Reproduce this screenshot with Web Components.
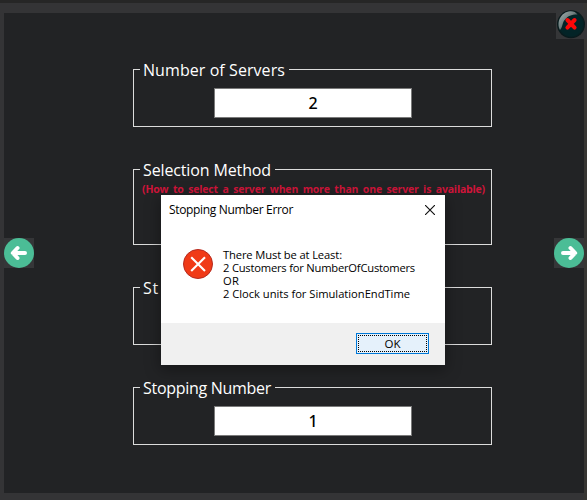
<!DOCTYPE html>
<html lang="en"><head><meta charset="utf-8"><title>Simulation setup</title>
<style>
html,body{margin:0;width:587px;height:500px;overflow:hidden;background:#343436}
</style></head><body>
<sim-window>
  <sim-group label="Number of Servers" w="142" style="height:58px;margin-bottom:42px"><sim-field value="2"></sim-field></sim-group>
  <sim-group label="Selection Method" w="128" style="height:76px;margin-bottom:42px"><sim-note></sim-note></sim-group>
  <sim-group label="St" w="16" style="height:58px;margin-bottom:42px"></sim-group>
  <sim-group label="Stopping Number" w="128" style="height:58px"><sim-field value="1"></sim-field></sim-group>
  <error-dialog slot="dialog"></error-dialog>
</sim-window>
<script>
const define=(name,html,setup)=>customElements.define(name,class extends HTMLElement{
  connectedCallback(){
    if(this.shadowRoot)return;
    this.attachShadow({mode:'open'}).innerHTML=html;
    if(setup)setup(this,this.shadowRoot);
  }
});
// Spreads one line of text over the width given in its "w" attribute.
define('fit-text','<style>:host{display:block;white-space:nowrap}span{display:inline-block}</style><span></span>',(el,r)=>{
  const s=r.querySelector('span'),t=el.getAttribute('text'),w=+el.getAttribute('w');
  s.textContent=t;
  s.style.letterSpacing=((w-s.getBoundingClientRect().width)/t.length)+'px';
  el.style.width=w+'px';
});
define('round-arrow',`<style>:host{display:block;width:30px;height:30px;background:#353638}svg{display:block}:host([dir=right]) g{transform:translate(30px,0) scaleX(-1)}</style>
<svg width="30" height="30"><circle cx="15" cy="15" r="15" fill="#4bbd96"/><g fill="none" stroke="#fff" stroke-width="4" stroke-linecap="round" stroke-linejoin="round"><path d="M21 15H9M13.5 10 8.8 15 13.5 20"/></g></svg>`);
define('glossy-close',`<style>:host{display:block;width:31px;height:29px;background:#353638}svg{display:block}</style>
<svg width="31" height="29"><defs><linearGradient id="g" x1="0" y1="0" x2="1" y2="1"><stop offset="0" stop-color="#a4b0b0"/><stop offset=".45" stop-color="#708080"/><stop offset=".75" stop-color="#28393a"/></linearGradient><radialGradient id="b"><stop offset=".82" stop-color="#032427"/><stop offset="1" stop-color="#0b1719"/></radialGradient></defs>
<circle cx="15" cy="14.3" r="14" fill="url(#b)"/><path d="M4 20C0 12 5 2 14 1.2 17 .9 20 2 21.5 4.5 15 4.5 12 6 9.5 9 6 12 7 17 4 20Z" fill="url(#g)"/>
<path d="M11.4 10 18.6 17.6M18.6 10 11.4 17.6" stroke="#fb0808" stroke-width="4" stroke-linecap="round"/></svg>`);
define('sim-field',`<style>:host{display:grid;place-items:center;box-sizing:border-box;width:198px;height:30px;margin:18px 0 0 80px;background:#fff;border:1px solid #7a7a7a;color:#000;font:500 16px/28px "Noto Sans",sans-serif}</style><span></span>`,(el,r)=>r.querySelector('span').textContent=el.getAttribute('value'));
define('sim-note',`<style>:host{display:block;padding:11px 0 0 8px;color:#d0143a;font:bold 10.5px/16px "Open Sans",sans-serif;word-spacing:2px}</style><fit-text w="343" text="(How to select a server when more than one server is available)"></fit-text>`);
define('sim-group',`<style>:host{display:block;box-sizing:border-box;width:359px;border:1px solid #dcdcdc}
.legend{height:0;display:flex;align-items:center}.legend div{background:#222325;margin-left:6px;padding:0 4px 0 3px;color:#fff;font:16px/20px "Open Sans",sans-serif}</style>
<div class="legend"><div></div></div><slot></slot>`,(el,r)=>{
  const f=document.createElement('fit-text');f.setAttribute('text',el.getAttribute('label'));f.setAttribute('w',el.getAttribute('w'));
  r.querySelector('.legend div').append(f);
});
define('error-dialog',`<style>:host{display:flex;flex-direction:column;width:284px;height:170px;background:#fff;color:#000;font:11.2px/13px "Open Sans",sans-serif;box-shadow:0 4px 14px 1px rgba(0,0,0,.35)}
header{display:flex;justify-content:space-between;align-items:center;height:29px;padding:0 10px 0 8px}header fit-text{font-size:12px}
main{flex:1;display:flex;padding:25px 22px 0}main>svg{flex:none;margin-right:9px}.lines{margin-top:-1px}
fit-text{height:13px}
footer{height:42px;background:#f0f0f0;display:flex;justify-content:flex-end;align-items:flex-start;padding:10px 16px 0;box-sizing:border-box}
button{box-sizing:border-box;width:73px;height:21px;padding:1px;background:#e5f1fb;border:1px solid #0078d7;color:#000;font:11.5px/15px "Open Sans",sans-serif}
button span{display:block;height:15px;border:1px dotted #000}</style>
<header><fit-text w="124" text="Stopping Number Error"></fit-text><svg width="10" height="10"><path d="M0 0 10 10M10 0 0 10" stroke="#111" stroke-width="1.15"/></svg></header>
<main><svg width="31" height="31"><circle cx="15" cy="15" r="14.5" fill="#f03a17" stroke="#b52b20"/><path d="M8.2 8.2 22 22M22 8.2 8.2 22" stroke="#fff" stroke-width="2.1"/></svg>
<div class="lines"><fit-text w="119" text="There Must be at Least:"></fit-text><fit-text w="192" text="2 Customers for NumberOfCustomers"></fit-text><fit-text w="16" text="OR"></fit-text><fit-text w="187" text="2 Clock units for SimulationEndTime"></fit-text></div></main>
<footer><button><span>OK</span></button></footer>`);
define('sim-window',`<style>:host{display:block;position:relative;box-sizing:border-box;width:587px;height:500px;padding:10px 3px 7px 4px;border-top:3px solid #262626;background:linear-gradient(90deg,#343436 583px,#373633 584px)}
.panel{display:grid;grid-template-columns:30px 458px 1fr;align-items:center;height:480px;background:#222325}
.groups{align-self:start;padding:56px 0 0 99px}
round-arrow[dir=right]{justify-self:end}
glossy-close{position:absolute;left:556px;top:7px}::slotted(error-dialog){position:absolute;left:161px;top:192px}</style>
<div class="panel"><round-arrow dir="left"></round-arrow><div class="groups"><slot></slot></div><round-arrow dir="right"></round-arrow></div>
<glossy-close></glossy-close><slot name="dialog"></slot>`);
</script></body></html>
